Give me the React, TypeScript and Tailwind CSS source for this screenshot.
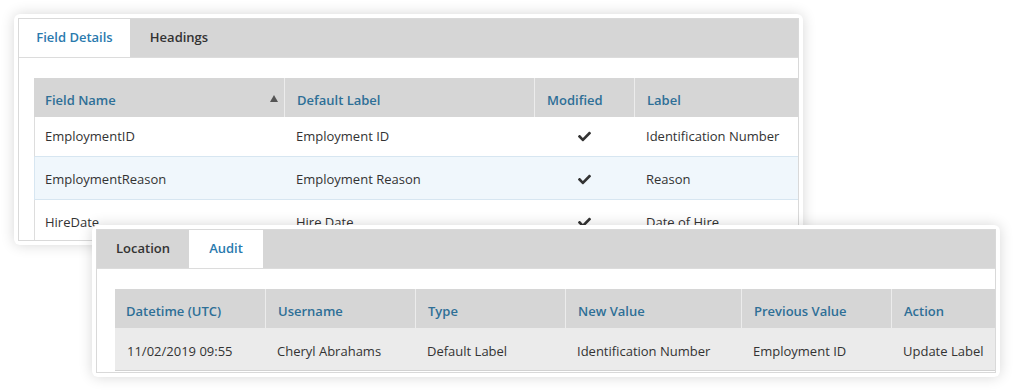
import { FaCheck } from 'react-icons/fa'

type Col = { title: string; width: string; sort?: boolean }
type Tab = { label: string; width: string }

const fieldCols: Col[] = [
  { title: 'Field Name', width: 'w-[250px]', sort: true },
  { title: 'Default Label', width: 'w-[250px]' },
  { title: 'Modified', width: 'w-[100px]' },
  { title: 'Label', width: 'w-[200px]' },
]

const fieldRows = [
  { name: 'EmploymentID', def: 'Employment ID', label: 'Identification Number', h: 'h-[40px]' },
  { name: 'EmploymentReason', def: 'Employment Reason', label: 'Reason', h: 'h-[43px] pt-[3px]' },
  { name: 'HireDate', def: 'Hire Date', label: 'Date of Hire', h: 'h-[43px] pt-[3px]' },
]

const auditCols: Col[] = [
  { title: 'Datetime (UTC)', width: 'w-[150px]' },
  { title: 'Username', width: 'w-[150px]' },
  { title: 'Type', width: 'w-[150px]' },
  { title: 'New Value', width: 'w-[176px]' },
  { title: 'Previous Value', width: 'w-[150px]' },
  { title: 'Action', width: 'w-[140px]' },
]

const auditRow = ['11/02/2019 09:55', 'Cheryl Abrahams', 'Default Label', 'Identification Number', 'Employment ID', 'Update Label']

function Tabs({ tabs, active }: { tabs: Tab[]; active: number }) {
  return (
    <div className="flex h-[39px] shrink-0 bg-[#d6d6d6] border-b border-[#dcdcdc]">
      {tabs.map((t, i) => (
        <div
          key={t.label}
          className={`${t.width} flex items-center justify-center text-[13px] font-semibold ${
            i === active ? 'bg-white text-[#2a7aae]' : 'text-[#333]'
          }`}
        >
          {t.label}
        </div>
      ))}
    </div>
  )
}

function HeaderRow({ cols }: { cols: Col[] }) {
  return (
    <div className="flex h-[39px] shrink-0 bg-[#d6d6d6]">
      {cols.map((c, i) => (
        <div
          key={c.title}
          className={`${c.width} shrink-0 flex items-center justify-between pt-[6px] text-[13px] font-semibold text-[#2e6f96] ${
            i > 0 ? 'border-l border-[#ececec] px-3' : 'pl-[11px] pr-3'
          }`}
        >
          <span>{c.title}</span>
          {c.sort && (
            <svg width="8" height="7" viewBox="0 0 8 7" className="mr-[-6px] mb-[4px]">
              <path d="M4 0 L8 7 L0 7 Z" fill="#555" />
            </svg>
          )}
        </div>
      ))}
    </div>
  )
}

function Card({ children, className }: { children: React.ReactNode; className: string }) {
  return (
    <div className={`bg-white rounded-md p-1 shadow-[0_0_14px_rgba(0,0,0,0.16)] ${className}`}>
      <div className="h-full flex flex-col border border-[#d9d9d9] overflow-hidden">{children}</div>
    </div>
  )
}

export default function App() {
  return (
    <div
      className="relative w-[1014px] h-[391px] bg-white overflow-hidden"
      style={{ fontFamily: '"Open Sans", "Noto Sans", sans-serif' }}
    >
      <Card className="ml-[14px] mt-[14px] w-[789px] h-[231px]">
        <Tabs
          tabs={[
            { label: 'Field Details', width: 'w-[111px]' },
            { label: 'Headings', width: 'w-[98px]' },
          ]}
          active={0}
        />
        <div className="pt-5 pl-[15px] flex flex-col">
          <HeaderRow cols={fieldCols} />
          {fieldRows.map((r, i) => (
            <div
              key={r.name}
              className={`flex ${r.h} shrink-0 border-l border-b text-[13px] text-[#333] ${
                i === 1 ? 'bg-[#f0f7fc] border-[#d7e6f1]' : 'bg-white border-l-[#dddddd] border-b-[#d7e6f1]'
              }`}
            >
              <div className="w-[249px] shrink-0 flex items-center px-[10px]">{r.name}</div>
              <div className="w-[250px] shrink-0 flex items-center px-3">{r.def}</div>
              <div className="w-[100px] shrink-0 flex items-center justify-center">
                <FaCheck size={13} className="text-[#333]" />
              </div>
              <div className="w-[200px] shrink-0 flex items-center px-3">{r.label}</div>
            </div>
          ))}
        </div>
      </Card>

      <Card className="absolute left-[92px] top-[225px] w-[908px] h-[152px]">
        <Tabs
          tabs={[
            { label: 'Location', width: 'w-[92px]' },
            { label: 'Audit', width: 'w-[74px]' },
          ]}
          active={1}
        />
        <div className="pt-5 pl-[18px] flex flex-col">
          <HeaderRow cols={auditCols} />
          <div className="flex h-[43px] pt-[5px] shrink-0 bg-[#ebebeb] border-b border-[#d2d2d2] text-[13px] text-[#333]">
            {auditRow.map((v, i) => (
              <div key={v} className={`${auditCols[i].width} shrink-0 flex items-center px-3`}>
                {v}
              </div>
            ))}
          </div>
        </div>
      </Card>
    </div>
  )
}
